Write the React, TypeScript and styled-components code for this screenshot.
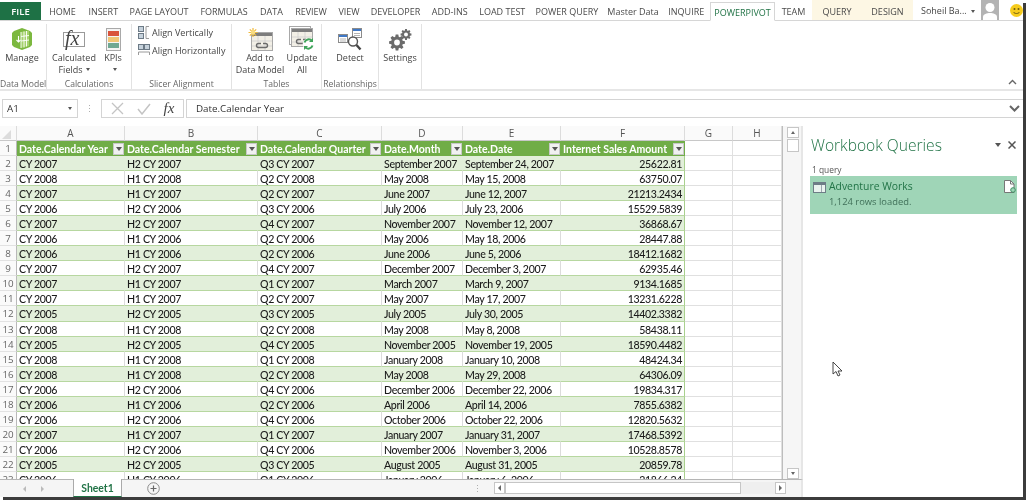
import React from "react";
import styled, { createGlobalStyle } from "styled-components";

const UI = `"Open Sans", "Noto Sans", sans-serif`;
const CELL = `Lato, Carlito, "Open Sans", sans-serif`;
const COLS = "17px 108px 133px 124px 81px 98px 124px 48px 49px";

const Global = createGlobalStyle`
  html, body { margin: 0; padding: 0; background: #fff; overflow: hidden; }
  * { box-sizing: border-box; }
`;

const Page = styled.div`
  width: 1028px; height: 501px; background: #fff; position: relative;
`;
const Shadowed = styled.div`
  width: 1023px; height: 497px; box-shadow: 3px 3px 0 #3c3c3c;
`;
const Frame = styled.div`
  width: 1023px; height: 497px; background: #fff; display: flex; flex-direction: column;
  overflow: hidden; font-family: ${UI}; color: #444; filter: blur(0.3px);
`;
const TabBar = styled.div`
  height: 21px; flex: none; display: flex; align-items: stretch; border-bottom: 1px solid #d6d6d6;
  background: #fff;
`;
const FileTab = styled.div`
  width: 42px; margin: 2px 1px 0 0; background: #1e7145; color: #fff; font-size: 9.5px; font-weight: 600;
  display: flex; align-items: center; justify-content: center;
`;
const Tab = styled.div<{ $w: number; $active?: boolean; $ctx?: boolean }>`
  width: ${p => p.$w}px; flex: none; display: flex; align-items: center; justify-content: center;
  font-size: 9px; white-space: nowrap; padding-top: 2px;
  color: ${p => (p.$active ? "#217346" : "#4a4a4a")};
  background: ${p => (p.$active ? "#fff" : p.$ctx ? "#fdf7e4" : "transparent")};
  ${p => p.$active && `border: 1px solid #d6d6d6; border-bottom: 1px solid #fff; margin: 2px 0 -1px;`}
`;
const UserArea = styled.div`
  margin-left: 8px; display: flex; align-items: flex-start; font-size: 9px; color: #444;
`;
const UserName = styled.span`
  width: 50px; line-height: 21px; white-space: nowrap;
`;
const Caret = styled.span`
  display: inline-block; width: 0; height: 0; border: 2px solid transparent; border-top: 3px solid #555;
  border-bottom: 0;
`;
const UserCaret = styled(Caret)`
  margin-top: 10px; margin-right: 6px;
`;
const Smile = styled.svg`
  margin: 4px 0 0 11px;
`;
const Avatar = styled.svg`
  display: block;
`;

const Ribbon = styled.div`
  height: 70px; flex: none; display: flex; padding-top: 3px; border-bottom: 2px solid #e6e6e6; position: relative;
`;
const Group = styled.div<{ $w: number }>`
  width: ${p => p.$w}px; flex: none; display: flex; flex-direction: column; border-right: 1px solid #e2e2e2;
  height: 65px;
`;
const GroupBody = styled.div<{ $col?: boolean; $pad?: number }>`
  flex: 1; display: flex; flex-direction: ${p => (p.$col ? "column" : "row")};
  padding-left: ${p => p.$pad ?? 0}px; ${p => p.$col && "margin-top: -1px;"}
`;
const GroupLabel = styled.div`
  height: 10px; line-height: 10px; text-align: center; font-size: 8.6px; color: #666; white-space: nowrap;
`;
const RBtn = styled.div<{ $w: number }>`
  width: ${p => p.$w}px; flex: none; display: flex; flex-direction: column; align-items: center;
  font-size: 9px; line-height: 12px; color: #444; white-space: nowrap; text-align: center;
`;
const RIcon = styled.div`
  height: 27px; display: flex; align-items: flex-end; justify-content: center; margin-bottom: 1px;
`;
const SliceRow = styled.div`
  height: 18px; display: flex; align-items: center; gap: 2px; font-size: 9px; color: #444; white-space: nowrap;
`;
const CaretLine = styled(Caret)`
  margin-left: 3px; vertical-align: 2px;
`;
const Collapse = styled.svg`
  position: absolute; right: 6px; bottom: 4px;
`;

const FormulaBar = styled.div`
  height: 35px; flex: none; display: flex; align-items: flex-start; padding: 8px 0 0 2px;
`;
const NameBox = styled.div`
  width: 76px; height: 19px; border: 1px solid #d4d4d4; display: flex; align-items: center;
  justify-content: space-between; padding: 0 5px 0 4px; font-size: 9.8px; color: #333;
`;
const Grip = styled.div`
  width: 23px; height: 19px; display: flex; align-items: center; justify-content: center;
  color: #aaa; font-size: 9px; letter-spacing: 0;
`;
const FxBox = styled.div`
  width: 83px; height: 19px; border: 1px solid #d4d4d4; display: flex; align-items: center;
  justify-content: space-around; padding: 0 2px;
`;
const FxGlyph = styled.span`
  font-family: "Liberation Serif", serif; font-style: italic; font-size: 15px; color: #444;
`;
const FormulaInput = styled.div`
  flex: 1; height: 19px; margin-left: 2px; border: 1px solid #d4d4d4; border-right: 0; display: flex;
  align-items: center; justify-content: space-between; padding: 0 3px 0 9px; font-size: 9.8px; color: #333;
`;

const Main = styled.div`
  flex: 1; min-height: 0; display: flex;
`;
const LeftCol = styled.div`
  width: 803px; flex: none; display: flex; flex-direction: column;
`;
const SheetArea = styled.div`
  flex: 1; min-height: 0; display: flex;
`;
const Viewport = styled.div`
  width: 783px; flex: none; overflow: hidden; border-right: 1px solid #bdbdbd; font-family: ${CELL};
  font-size: 10.6px; letter-spacing: -0.35px; font-weight: 500; color: #1a1a1a;
`;
const Row = styled.div<{ $h?: number }>`
  display: grid; grid-template-columns: ${COLS}; height: ${p => p.$h ?? 15.05}px;
`;
const ColHead = styled.div`
  background: #fafafa; border-right: 1px solid #dcdcdc; border-bottom: 1px solid #c8c8c8; display: flex;
  align-items: center; justify-content: center; font-size: 10px; letter-spacing: 0; color: #555;
  font-family: ${UI}; font-weight: 400; position: relative;
`;
const CornerMark = styled.span`
  width: 0; height: 0; border-left: 9px solid transparent; border-bottom: 9px solid #dcdcdc;
  margin: 2px 0 0 -4px;
`;
const RowHead = styled.div`
  background: #fafafa; border-right: 1px solid #b9b9b9; border-bottom: 1px solid #e2e2e2; display: flex;
  align-items: center; justify-content: center; font-size: 9.8px; letter-spacing: 0; color: #666;
  font-family: ${UI}; font-weight: 400; padding-top: 1px;
`;
const HeadCell = styled.div`
  background: #70ad47; color: #fff; font-weight: 700; font-size: 10.5px; letter-spacing: 0; display: flex;
  align-items: center; justify-content: space-between; padding: 1px 1px 0 2px; white-space: nowrap; overflow: hidden;
`;
const Filter = styled.span`
  width: 11px; height: 12px; background: #f1f1f1; border: 1px solid #c8c8c8; flex: none; display: flex;
  align-items: center; justify-content: center;
`;
const FilterArrow = styled.span`
  width: 0; height: 0; border: 3px solid transparent; border-top: 4px solid #555; border-bottom: 0;
`;
const Cell = styled.div<{ $band: boolean; $num?: boolean }>`
  background: ${p => (p.$band ? "#e2efda" : "#fff")};
  border-bottom: 1px solid #b7d7a0;
  border-right: 1px solid ${p => (p.$band && !p.$num ? "transparent" : "#dcdcdc")};
  ${p => p.$num && `border-right-color: #a9d08e; text-align: right;`}
  padding: 1px 2px 0; line-height: 14px; white-space: nowrap; overflow: hidden;
`;
const BlankCell = styled.div`
  border-right: 1px solid #e0e0e0; border-bottom: 1px solid #e0e0e0;
`;
const VScroll = styled.div`
  width: 20px; flex: none; background: #f6f6f6; border-right: 2px solid #e6e6e6; padding: 1px 2px 0 4px;
  display: flex; flex-direction: column;
`;
const ScrollBtn = styled.div`
  height: 11px; flex: none; background: #fff; border: 1px solid #c6c6c6; display: flex; align-items: center;
  justify-content: center;
`;
const Thumb = styled.div`
  height: 13px; flex: none; background: #fff; border: 1px solid #c6c6c6; margin-top: 1px;
`;
const VTrack = styled.div`
  flex: 1;
`;
const Up = styled.span`
  width: 0; height: 0; border: 2.5px solid transparent; border-bottom: 3px solid #666; border-top: 0;
`;
const Down = styled.span`
  width: 0; height: 0; border: 2.5px solid transparent; border-top: 3px solid #666; border-bottom: 0;
`;
const SheetBar = styled.div`
  height: 18px; flex: none; background: #f5f5f5; border-right: 2px solid #e6e6e6; border-top: 1px solid #b5b5b5;
  display: flex; align-items: stretch; position: relative;
`;
const NavArea = styled.div`
  width: 73px; display: flex; align-items: center; justify-content: center; gap: 15px; padding-right: 6px;
`;
const NavL = styled.span`
  width: 0; height: 0; border: 3px solid transparent; border-right: 3px solid #bbb; border-left: 0;
`;
const NavR = styled.span`
  width: 0; height: 0; border: 3px solid transparent; border-left: 3px solid #bbb; border-right: 0;
`;
const ArrowL = styled(NavL)`
  border-right-color: #666;
`;
const ArrowR = styled(NavR)`
  border-left-color: #666;
`;
const SheetTab = styled.div`
  width: 49px; background: #fff; border-right: 1px solid #aaa; border-left: 1px solid #aaa; border-bottom: 1px solid #217346;
  margin-top: -1px; color: #217346; font-family: ${CELL}; font-weight: 700; font-size: 10.4px; display: flex;
  align-items: center; justify-content: center;
`;
const PlusWrap = styled.div`
  width: 62px; display: flex; align-items: center; justify-content: center;
`;
const Dots = styled.div`
  width: 310px; display: flex; align-items: center; justify-content: flex-end; color: #aaa; font-size: 9px;
  padding-right: 12px;
`;
const HScroll = styled.div`
  width: 292px; height: 12px; margin-top: 2px; display: flex;
`;
const HBtn = styled.div`
  width: 11px; flex: none; background: #fff; border: 1px solid #c6c6c6; display: flex; align-items: center;
  justify-content: center;
`;
const HThumb = styled.div`
  width: 236px; flex: none; background: #fff; border: 1px solid #c6c6c6;
`;
const HTrack = styled.div`
  flex: 1; background: #efefef;
`;

const Pane = styled.div`
  flex: 1; padding: 9px 6px 0 8px; background: #fff;
`;
const PaneHead = styled.div`
  display: flex; align-items: center; height: 20px;
`;
const PaneTitle = styled.div`
  flex: 1; font-size: 15.6px; font-weight: 300; color: #217346; white-space: nowrap; line-height: 20px;
`;
const PaneCaret = styled(Caret)`
  border-width: 3px; border-top-width: 4px; margin-right: 7px;
`;
const PaneClose = styled.svg`
  margin-right: 1px;
`;
const QueryCount = styled.div`
  margin-top: 9px; height: 11px; line-height: 11px; font-size: 8.4px; color: #555; padding-left: 1px;
`;
const QueryCard = styled.div`
  height: 38px; background: #9fd5b7; position: relative; padding: 3px 0 0 19px; margin: 1px 0 0 -1px;
`;
const QueryName = styled.div`
  font-size: 10.4px; color: #217346; line-height: 15px;
`;
const QueryStatus = styled.div`
  font-size: 9.4px; color: #3f6f58; line-height: 16px;
`;
const CardIcon = styled.svg`
  position: absolute; left: 3px; top: 6px;
`;
const CardFile = styled.svg`
  position: absolute; right: 1px; top: 4px;
`;
const Cursor = styled.svg`
  position: absolute; left: 832px; top: 361px;
`;

const rows: string[][] = [
  ["CY 2007","H2 CY 2007","Q3 CY 2007","September 2007","September 24, 2007","25622.81"],
  ["CY 2008","H1 CY 2008","Q2 CY 2008","May 2008","May 15, 2008","63750.07"],
  ["CY 2007","H1 CY 2007","Q2 CY 2007","June 2007","June 12, 2007","21213.2434"],
  ["CY 2006","H2 CY 2006","Q3 CY 2006","July 2006","July 23, 2006","15529.5839"],
  ["CY 2007","H2 CY 2007","Q4 CY 2007","November 2007","November 12, 2007","36868.67"],
  ["CY 2006","H1 CY 2006","Q2 CY 2006","May 2006","May 18, 2006","28447.88"],
  ["CY 2006","H1 CY 2006","Q2 CY 2006","June 2006","June 5, 2006","18412.1682"],
  ["CY 2007","H2 CY 2007","Q4 CY 2007","December 2007","December 3, 2007","62935.46"],
  ["CY 2007","H1 CY 2007","Q1 CY 2007","March 2007","March 9, 2007","9134.1685"],
  ["CY 2007","H1 CY 2007","Q2 CY 2007","May 2007","May 17, 2007","13231.6228"],
  ["CY 2005","H2 CY 2005","Q3 CY 2005","July 2005","July 30, 2005","14402.3382"],
  ["CY 2008","H1 CY 2008","Q2 CY 2008","May 2008","May 8, 2008","58438.11"],
  ["CY 2005","H2 CY 2005","Q4 CY 2005","November 2005","November 19, 2005","18590.4482"],
  ["CY 2008","H1 CY 2008","Q1 CY 2008","January 2008","January 10, 2008","48424.34"],
  ["CY 2008","H1 CY 2008","Q2 CY 2008","May 2008","May 29, 2008","64306.09"],
  ["CY 2006","H2 CY 2006","Q4 CY 2006","December 2006","December 22, 2006","19834.317"],
  ["CY 2006","H1 CY 2006","Q2 CY 2006","April 2006","April 14, 2006","7855.6382"],
  ["CY 2006","H2 CY 2006","Q4 CY 2006","October 2006","October 22, 2006","12820.5632"],
  ["CY 2007","H1 CY 2007","Q1 CY 2007","January 2007","January 31, 2007","17468.5392"],
  ["CY 2006","H2 CY 2006","Q4 CY 2006","November 2006","November 3, 2006","10528.8578"],
  ["CY 2005","H2 CY 2005","Q3 CY 2005","August 2005","August 31, 2005","20859.78"],
  ["CY 2006","H1 CY 2006","Q1 CY 2006","January 2006","January 6, 2006","21866.24"],
];
const headers = ["Date.Calendar Year","Date.Calendar Semester","Date.Calendar Quarter","Date.Month","Date.Date","Internet Sales Amount"];
const tabs: [string, number][] = [
  ["HOME",41],["INSERT",40.5],["PAGE LAYOUT",71],["FORMULAS",59],["DATA",36],["REVIEW",43],["VIEW",33],
  ["DEVELOPER",60],["ADD-INS",48.5],["LOAD TEST",56.5],["POWER QUERY",73],["Master Data",59],["INQUIRE",47.5],
];

function gear(cx: number, cy: number, r: number, n: number) {
  const pts: string[] = [];
  for (let i = 0; i < n; i++) {
    const a = (i / n) * Math.PI * 2;
    const w = Math.PI / n;
    const p = (rad: number, t: number) => `${(cx + rad * Math.cos(t)).toFixed(2)} ${(cy + rad * Math.sin(t)).toFixed(2)}`;
    pts.push(p(r * 0.74, a - w * 0.75), p(r, a - w * 0.42), p(r, a + w * 0.42), p(r * 0.74, a + w * 0.75));
  }
  const h = r * 0.36;
  return `M${pts.join("L")}Z M${cx - h} ${cy}a${h} ${h} 0 1 0 ${h * 2} 0a${h} ${h} 0 1 0 ${-h * 2} 0Z`;
}

const TableLink = ({ x = 0, y = 0 }: { x?: number; y?: number }) => (
  <g transform={`translate(${x} ${y})`}>
    <rect x="0.5" y="0.5" width="21" height="18" fill="#f2efe6" stroke="#a8a8a8" />
    <rect x="1" y="1" width="20" height="3" fill="#7d7d7d" />
    <path d="M1 9h20M1 14h20M7 4v14M14 4v14" stroke="#cfcfcf" strokeWidth="0.8" />
    <path d="M10 11.5H7.5a2 2 0 0 0 0 4H11M12 11.5h2.5a2 2 0 0 1 0 4H11" fill="none" stroke="#6b6b6b" strokeWidth="1.4" />
  </g>
);

const Icons = {
  Manage: () => (
    <svg width="22" height="24" viewBox="0 0 22 24">
      <path d="M3 4 11 1l8 3 2 2v12l-2 2-8 3-8-3-2-2V6z" fill="#7cb83f" />
      <path d="M10 5l8-1.500V19l-8 2z" fill="#a5d16c" />
      <path d="M10 5v16M13 4.500v16M15.500 4v15.500M10 9.500l8-1M10 14l8-1" stroke="#fff" strokeWidth="0.9" fill="none" />
      <path d="M7.500 9v6M5.500 13l2 2 2-2" stroke="#fff" strokeWidth="1.100" fill="none" />
    </svg>
  ),
  Fx: () => (
    <svg width="24" height="24" viewBox="0 0 24 24">
      <rect x="1.500" y="5.500" width="21" height="14" fill="#fff" stroke="#9a9a9a" />
      <text x="3" y="18" fontFamily="'Liberation Serif', serif" fontStyle="italic" fontSize="20" fill="#444">fx</text>
    </svg>
  ),
  Kpi: () => (
    <svg width="15" height="23" viewBox="0 0 15 23">
      <rect x="0.500" y="0.500" width="14" height="22" fill="#f4f4f4" stroke="#a9a9a9" />
      <rect x="2" y="3" width="11" height="5" fill="#d9533b" />
      <rect x="2" y="9" width="11" height="5" fill="#f0c676" />
      <rect x="2" y="15" width="11" height="5" fill="#6fa892" />
    </svg>
  ),
  AlignV: () => (
    <svg width="12" height="13" viewBox="0 0 12 13">
      <rect x="0.500" y="0.500" width="5" height="5" fill="#c6d2dc" stroke="#6c7a86" />
      <rect x="0.500" y="7.500" width="5" height="5" fill="#c6d2dc" stroke="#6c7a86" />
      <path d="M11 .5H8v12h3" fill="none" stroke="#9a9a9a" />
    </svg>
  ),
  AlignH: () => (
    <svg width="12" height="12" viewBox="0 0 12 12">
      <rect x="0.500" y="0.500" width="5" height="5" fill="#c6d2dc" stroke="#6c7a86" />
      <rect x="6.500" y="0.500" width="5" height="5" fill="#c6d2dc" stroke="#6c7a86" />
      <path d="M.5 11V8h11v3" fill="none" stroke="#9a9a9a" />
    </svg>
  ),
  AddTable: () => (
    <svg width="25" height="23" viewBox="0 0 25 23">
      <TableLink x={3} y={4} />
      <g stroke="#f0b93a" strokeWidth="1.200">
        <path d="M5 0v9M0.500 4.500h9M1.800 1.300l6.400 6.400M8.200 1.300 1.800 7.700" />
      </g>
      <circle cx="5" cy="4.500" r="2.300" fill="#f8dc80" />
    </svg>
  ),
  Update: () => (
    <svg width="26" height="25" viewBox="0 0 26 25">
      <rect x="0.500" y="0.500" width="21" height="18" fill="#fff" stroke="#a8a8a8" />
      <TableLink x={2} y={2} />
      <circle cx="19.500" cy="18" r="5.800" fill="#fff" />
      <path d="M15.500 16.500a4.300 4.300 0 0 1 7.500-1.500M23.500 19.500a4.300 4.300 0 0 1-7.500 1.500" fill="none" stroke="#3fa45a" strokeWidth="2" />
      <path d="M24 12v4h-4zM15 24v-4h4z" fill="#3fa45a" />
    </svg>
  ),
  Detect: () => (
    <svg width="25" height="23" viewBox="0 0 25 23">
      <rect x="0.500" y="6.500" width="9" height="8" fill="#fff" stroke="#8b8b8b" />
      <rect x="1" y="7" width="8" height="2" fill="#3f78c6" />
      <rect x="14.500" y="0.500" width="9" height="9" fill="#fff" stroke="#8b8b8b" />
      <rect x="15" y="1" width="8" height="2" fill="#3f78c6" />
      <path d="M16 5.500h6M16 7.500h6M2 11h6M2 13h6" stroke="#b5b5b5" />
      <circle cx="15" cy="13.500" r="4.500" fill="#fff" stroke="#555" strokeWidth="1.400" />
      <path d="M18.500 17l4 4.500" stroke="#444" strokeWidth="2.400" />
    </svg>
  ),
  Settings: () => (
    <svg width="23" height="22" viewBox="0 0 23 22">
      <path d={gear(8, 13.500, 8, 8)} fill="#6b6b6b" fillRule="evenodd" />
      <path d={gear(17, 5.500, 5.500, 8)} fill="#6b6b6b" fillRule="evenodd" />
    </svg>
  ),
};

export default function App() {
  return (
    <Page>
      <Global />
      <Shadowed>
      <Frame>
        <TabBar>
          <FileTab>FILE</FileTab>
          {tabs.map(([t, w]) => <Tab key={t} $w={w}>{t}</Tab>)}
          <Tab $w={65} $active>POWERPIVOT</Tab>
          <Tab $w={37}>TEAM</Tab>
          <Tab $w={50} $ctx>QUERY</Tab>
          <Tab $w={51} $ctx>DESIGN</Tab>
          <UserArea>
            <UserName>Soheil Ba...</UserName>
            <UserCaret />
            <Avatar width="18" height="20" viewBox="0 0 18 20">
              <rect width="18" height="20" fill="#b3b3b3" />
              <circle cx="9" cy="7.500" r="4.500" fill="#fff" />
              <path d="M2 20v-3c0-3 4-4 7-4s7 1 7 4v3z" fill="#fff" />
            </Avatar>
            <Smile width="13" height="13" viewBox="0 0 13 13">
              <circle cx="6.500" cy="6.500" r="6.500" fill="#f6cc1d" />
              <circle cx="4.500" cy="5" r="1" fill="#6b5a10" />
              <circle cx="8.500" cy="5" r="1" fill="#6b5a10" />
              <path d="M3.500 8c1 2 5 2 6 0" fill="none" stroke="#6b5a10" />
            </Smile>
          </UserArea>
        </TabBar>

        <Ribbon>
          <Group $w={47}>
            <GroupBody>
              <RBtn $w={44}><RIcon><Icons.Manage /></RIcon>Manage</RBtn>
            </GroupBody>
            <GroupLabel>Data Model</GroupLabel>
          </Group>
          <Group $w={85}>
            <GroupBody>
              <RBtn $w={54}><RIcon><Icons.Fx /></RIcon>Calculated<span>Fields<CaretLine /></span></RBtn>
              <RBtn $w={24}><RIcon><Icons.Kpi /></RIcon>KPIs<span><CaretLine /></span></RBtn>
            </GroupBody>
            <GroupLabel>Calculations</GroupLabel>
          </Group>
          <Group $w={100}>
            <GroupBody $col $pad={6}>
              <SliceRow><Icons.AlignV />Align Vertically</SliceRow>
              <SliceRow><Icons.AlignH />Align Horizontally</SliceRow>
            </GroupBody>
            <GroupLabel>Slicer Alignment</GroupLabel>
          </Group>
          <Group $w={90}>
            <GroupBody>
              <RBtn $w={56}><RIcon><Icons.AddTable /></RIcon>Add to<span>Data Model</span></RBtn>
              <RBtn $w={28}><RIcon><Icons.Update /></RIcon>Update<span>All</span></RBtn>
            </GroupBody>
            <GroupLabel>Tables</GroupLabel>
          </Group>
          <Group $w={57}>
            <GroupBody>
              <RBtn $w={56}><RIcon><Icons.Detect /></RIcon>Detect</RBtn>
            </GroupBody>
            <GroupLabel>Relationships</GroupLabel>
          </Group>
          <Group $w={43}>
            <GroupBody>
              <RBtn $w={42}><RIcon><Icons.Settings /></RIcon>Settings</RBtn>
            </GroupBody>
          </Group>
          <Collapse width="9" height="6" viewBox="0 0 9 6">
            <path d="M1 5l3.500-3.500L8 5" fill="none" stroke="#666" strokeWidth="1.400" />
          </Collapse>
        </Ribbon>

        <FormulaBar>
          <NameBox>A1<Caret /></NameBox>
          <Grip>⋮</Grip>
          <FxBox>
            <svg width="13" height="13" viewBox="0 0 13 13"><path d="M1 1l11 11M12 1 1 12" stroke="#c4c4c4" strokeWidth="1.300" /></svg>
            <svg width="14" height="12" viewBox="0 0 14 12"><path d="M1 6l4 5 8-10" fill="none" stroke="#c4c4c4" strokeWidth="1.500" /></svg>
            <FxGlyph>fx</FxGlyph>
          </FxBox>
          <FormulaInput>
            Date.Calendar Year
            <svg width="11" height="7" viewBox="0 0 11 7"><path d="M1 1l4.500 4.500L10 1" fill="none" stroke="#666" strokeWidth="2" /></svg>
          </FormulaInput>
        </FormulaBar>

        <Main>
          <LeftCol>
            <SheetArea>
              <Viewport>
                <Row $h={15}>
                  <ColHead><CornerMark /></ColHead>
                  {["A","B","C","D","E","F","G","H"].map(c => <ColHead key={c}>{c}</ColHead>)}
                </Row>
                <Row $h={15}>
                  <RowHead>1</RowHead>
                  {headers.map(h => (
                    <HeadCell key={h}>{h}<Filter><FilterArrow /></Filter></HeadCell>
                  ))}
                  <BlankCell /><BlankCell />
                </Row>
                {rows.map((r, i) => {
                  const band = i % 2 === 0;
                  return (
                    <Row key={i}>
                      <RowHead>{i + 2}</RowHead>
                      {r.map((v, j) => (
                        <Cell key={j} $band={band} $num={j === 5}>{v}</Cell>
                      ))}
                      <BlankCell /><BlankCell />
                    </Row>
                  );
                })}
              </Viewport>
              <VScroll>
                <ScrollBtn><Up /></ScrollBtn>
                <Thumb />
                <VTrack />
                <ScrollBtn><Down /></ScrollBtn>
              </VScroll>
            </SheetArea>
            <SheetBar>
              <NavArea><NavL /><NavR /></NavArea>
              <SheetTab>Sheet1</SheetTab>
              <PlusWrap>
                <svg width="13" height="13" viewBox="0 0 13 13">
                  <circle cx="6.500" cy="6.500" r="5.800" fill="none" stroke="#8a8a8a" />
                  <path d="M6.500 3.500v6M3.500 6.500h6" stroke="#666" strokeWidth="1.200" />
                </svg>
              </PlusWrap>
              <Dots>⋮</Dots>
              <HScroll>
                <HBtn><ArrowL /></HBtn>
                <HThumb />
                <HTrack />
                <HBtn><ArrowR /></HBtn>
              </HScroll>
            </SheetBar>
          </LeftCol>
          <Pane>
            <PaneHead>
              <PaneTitle>Workbook Queries</PaneTitle>
              <PaneCaret />
              <PaneClose width="8" height="8" viewBox="0 0 8 8"><path d="M.5.500l7 7M7.500.500l-7 7" stroke="#555" strokeWidth="1.500" /></PaneClose>
            </PaneHead>
            <QueryCount>1 query</QueryCount>
            <QueryCard>
              <CardIcon width="13" height="11" viewBox="0 0 13 11">
                <rect x="0.500" y="0.500" width="12" height="10" fill="#e9f3ee" stroke="#6d7d86" />
                <rect x="1" y="1" width="11" height="2" fill="#6d7d86" />
                <path d="M8.500 3v7" stroke="#9aa6ad" />
              </CardIcon>
              <QueryName>Adventure Works</QueryName>
              <QueryStatus>1,124 rows loaded.</QueryStatus>
              <CardFile width="12" height="13" viewBox="0 0 12 13">
                <path d="M.5.500h6l3.500 3.500v8.500H.5z" fill="#fff" stroke="#777" />
                <path d="M6.500.500V4H10" fill="none" stroke="#777" />
                <circle cx="9" cy="10" r="2.300" fill="#9fd5b7" stroke="#3f8f63" />
              </CardFile>
            </QueryCard>
          </Pane>
        </Main>
      </Frame>
      </Shadowed>
      <Cursor width="11" height="16" viewBox="0 0 11 16">
        <path d="M1 1v12l3-2.500L6 15l2-1-2-4h4z" fill="#fff" stroke="#333" strokeWidth="0.9" />
      </Cursor>
    </Page>
  );
}
